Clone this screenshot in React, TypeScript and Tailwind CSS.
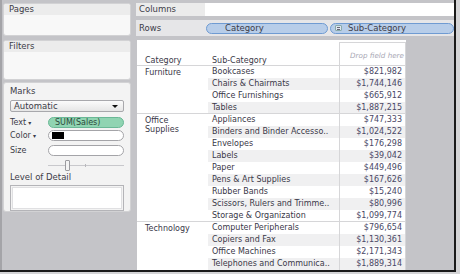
import React from "react";

const sections = [
  {
    cat: ["Furniture"],
    rows: [
      ["Bookcases", "$821,982"],
      ["Chairs & Chairmats", "$1,744,146"],
      ["Office Furnishings", "$665,912"],
      ["Tables", "$1,887,215"],
    ],
  },
  {
    cat: ["Office", "Supplies"],
    rows: [
      ["Appliances", "$747,333"],
      ["Binders and Binder Accesso..", "$1,024,522"],
      ["Envelopes", "$176,298"],
      ["Labels", "$39,042"],
      ["Paper", "$449,496"],
      ["Pens & Art Supplies", "$167,626"],
      ["Rubber Bands", "$15,240"],
      ["Scissors, Rulers and Trimme..", "$80,996"],
      ["Storage & Organization", "$1,099,774"],
    ],
  },
  {
    cat: ["Technology"],
    rows: [
      ["Computer Peripherals", "$796,654"],
      ["Copiers and Fax", "$1,130,361"],
      ["Office Machines", "$2,171,343"],
      ["Telephones and Communica..", "$1,889,314"],
    ],
  },
];

function Card({
  title,
  className,
  children,
}: {
  title: string;
  className: string;
  children?: React.ReactNode;
}) {
  return (
    <div
      className={`flex flex-col overflow-hidden rounded-[3px] border border-[#d2d2d4] bg-[#f8f8f8] ${className}`}
    >
      <div className="h-[11px] bg-[#ececec] pl-[5px] text-[8.5px] leading-[11px] text-[#3c3c48]">
        {title}
      </div>
      {children}
    </div>
  );
}

export default function App() {
  return (
    <div className="h-[274px] w-[460px] overflow-hidden bg-[#d4d4d6] font-['DejaVu_Sans',sans-serif]">
      <div className="flex h-[272px] w-[456px] border-b-2 border-r-2 border-[#1a1a1a] bg-[#c4c4c8]">
        {/* Sidebar */}
        <div className="flex w-[136px] flex-col border-l-[2px] border-[#a4a4a8] pl-[1px] pt-[3px]">
          <Card title="Pages" className="h-[33px] w-[128px]" />
          <Card title="Filters" className="mt-[4px] h-[40px] w-[128px]" />

          {/* Marks */}
          <div className="mt-[2px] flex h-[130px] w-[128px] flex-col rounded-[3px] border border-[#d2d2d4] bg-[#f3f3f3] px-[6px] text-[8px] text-[#3c3c48]">
            <div className="mt-[3px] text-[8.5px] leading-[11px]">Marks</div>

            <div className="mt-[3px] flex h-[12px] items-center justify-between rounded-[2px] border border-[#a8a8ac] bg-gradient-to-b from-[#fbfbfb] to-[#e6e6e6] pl-[3px] pr-[5px] text-[8.5px]">
              <span>Automatic</span>
              <span className="h-0 w-0 border-x-[3px] border-t-[3px] border-x-transparent border-t-[#111]" />
            </div>

            <div className="mt-[5px] flex h-[11px] items-center">
              <span className="w-[38px]">
                Text<span className="ml-[2px] text-[6px]">▾</span>
              </span>
              <div className="flex h-[11px] flex-1 items-center rounded-full border border-[#6ab896] bg-[#90d4b2] pl-[6px] text-[8px] text-[#2c4a3c]">
                SUM(Sales)
              </div>
            </div>

            <div className="mt-[2px] flex h-[11px] items-center">
              <span className="w-[38px]">
                Color<span className="ml-[2px] text-[6px]">▾</span>
              </span>
              <div className="flex h-[11px] flex-1 items-center rounded-full border border-[#a4a4a8] bg-white pl-[3px]">
                <div className="h-[7px] w-[12px] bg-black" />
              </div>
            </div>

            <div className="mt-[4px] flex h-[11px] items-center">
              <span className="w-[38px]">Size</span>
              <div className="h-[11px] flex-1 rounded-full border border-[#a4a4a8] bg-white" />
            </div>

            <div className="relative ml-[38px] mt-[4px] h-[11px]">
              <div className="absolute left-0 right-0 top-[5px] h-px bg-[#c8c8cc]" />
              <div className="absolute left-[37px] top-[4px] h-[3px] w-px bg-[#b8b8bc]" />
              <div className="absolute left-[17px] top-0 h-[11px] w-[5px] rounded-[1px] border border-[#9c9ca0] bg-[#f4f4f4]" />
            </div>

            <div className="mt-[1px] text-[8.5px] leading-[11px]">Level of Detail</div>
            <div className="mt-[2px] h-[26px] border border-[#b4b4b8] p-px">
              <div className="h-full border border-[#e0e0e2] bg-white" />
            </div>
          </div>
        </div>

        {/* Main */}
        <div className="flex flex-1 flex-col pt-[3px] text-[#3c3c48]">
          <div className="flex h-[13px] text-[8.5px] leading-[13px]">
            <div className="w-[69px] bg-[#ebebeb] pl-[3px]">Columns</div>
            <div className="flex-1 bg-white" />
          </div>

          <div className="mt-[4px] flex h-[16px] items-center bg-[#e6e6e8] text-[8.5px]">
            <div className="w-[70px] pl-[3px]">Rows</div>
            <div className="flex h-[11px] w-[122px] items-center rounded-full border border-[#6f9bd2] bg-[#b7cde9] pl-[18px]">
              Category
            </div>
            <div className="ml-[2px] flex h-[11px] flex-1 items-center rounded-full border border-[#6f9bd2] bg-[#b7cde9] pl-[4px]">
              <span className="mr-[6px] flex h-[6px] w-[7px] flex-col justify-center gap-px rounded-[1px] border border-[#8aa] bg-[#dde6f0] px-px">
                <span className="h-px bg-[#667]" />
                <span className="h-px bg-[#667]" />
              </span>
              Sub-Category
            </div>
          </div>

          <div className="mt-[4px] flex flex-1">
            {/* Table */}
            <div className="ml-px flex h-[230px] w-[269px] flex-col bg-white text-[8px] text-[#3a3848]">
              <div className="flex h-[26px] border-b border-[#d6d6d8]">
                <div className="flex w-[71px] items-end pl-[8px] leading-[8px]">Category</div>
                <div className="flex w-[131px] items-end pl-[4px] leading-[8px]">Sub-Category</div>
                <div className="mt-[2px] w-[67px] border-x border-t border-[#d6d6d8] pr-px pt-[8px] text-right text-[7.2px] italic text-[#a8a8b4]">
                  Drop field here
                </div>
              </div>
              {sections.map((s, si) => (
                <div
                  key={si}
                  className={`flex ${si < 2 ? "border-b border-[#d6d6d8]" : ""}`}
                >
                  <div className="w-[71px] pl-[8px] pt-[2px] text-[8px] leading-[9px]">
                    {s.cat.map((c) => (
                      <div key={c}>{c}</div>
                    ))}
                  </div>
                  <div className="flex-1">
                    {s.rows.map(([name, val], ri) => (
                      <div
                        key={name}
                        className={`flex h-[12px] items-center leading-[12px] ${ri % 2 === 1 ? "bg-[#f0f0f1]" : ""}`}
                        style={{ height: si < 2 && ri === s.rows.length - 1 ? 11 : 12 }}
                      >
                        <div className="w-[131px] whitespace-nowrap pl-[4px]">{name}</div>
                        <div className="h-full w-[67px] border-x border-[#d6d6d8] pr-[3px] text-right text-[#4a4866]">
                          {val}
                        </div>
                      </div>
                    ))}
                  </div>
                </div>
              ))}
            </div>
            <div className="flex-1" />
          </div>
        </div>
      </div>
    </div>
  );
}
